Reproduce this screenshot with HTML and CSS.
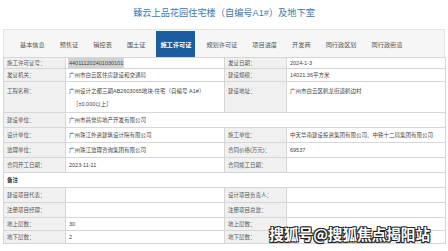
FILE: index.html
```html
<!DOCTYPE html>
<html>

<head>
	<title>施工许可证</title>
	<link rel="stylesheet" href="styles.css">
</head>

<body>
	<div class="title">臻云上品花园住宅楼（自编号A1#）及地下室</div>

	<!-- tab bar -->
	<div class="tabs">
		<span class="tab">基本信息</span>
		<span class="tab">预售证</span>
		<span class="tab">销控表</span>
		<span class="tab">国土证</span>
		<span class="tab active">施工许可证</span>
		<span class="tab">规划许可证</span>
		<span class="tab">项目进度</span>
		<span class="tab">开发商</span>
		<span class="tab">同行政区划</span>
		<span class="tab">同行政街道</span>
	</div>

	<table class="info">
		<colgroup>
			<col class="c-label">
			<col class="c-value">
			<col class="c-label">
			<col class="c-value">
		</colgroup>
		<tr class="r1">
			<td class="label">施工许可证号：</td>
			<td><span class="sel">440111202401030101</span></td>
			<td class="label">发证日期：</td>
			<td>2024-1-3</td>
		</tr>
		<tr class="r2">
			<td class="label">发证机关：</td>
			<td>广州市白云区住房建设和交通局</td>
			<td class="label">建设规模：</td>
			<td>14021.36平方米</td>
		</tr>
		<tr class="r3">
			<td class="label">工程名称：</td>
			<td>广州设计之都三期AB2603065地块-住宅（自编号 A1#）<br><span class="indent">［±0.000以上］</span></td>
			<td class="label">建设地址：</td>
			<td>广州市白云区鹤龙街道鹤边村</td>
		</tr>
		<tr>
			<td class="label">建设单位：</td>
			<td colspan="3">广州市昌誉房地产开发有限公司</td>
		</tr>
		<tr>
			<td class="label">设计单位：</td>
			<td>广州珠江外资建筑设计院有限公司</td>
			<td class="label">施工单位：</td>
			<td>中天华南建设投资集团有限公司、中铁十二局集团有限公司</td>
		</tr>
		<tr>
			<td class="label">监理单位：</td>
			<td>广州珠江监理咨询集团有限公司</td>
			<td class="label">合同价格(万元)：</td>
			<td>69537</td>
		</tr>
		<tr>
			<td class="label">合同开工日期：</td>
			<td>2023-11-11</td>
			<td class="label">合同竣工日期：</td>
			<td></td>
		</tr>
		<tr>
			<td colspan="4" class="note">备注</td>
		</tr>
		<tr>
			<td class="label">建设项目代表：</td>
			<td></td>
			<td class="label">设计项目负责人：</td>
			<td></td>
		</tr>
		<tr>
			<td class="label">注册项目经理：</td>
			<td></td>
			<td class="label">注册项目总监：</td>
			<td></td>
		</tr>
		<tr class="r-low">
			<td class="label">地上层数：</td>
			<td>30</td>
			<td class="label">地上层数：</td>
			<td></td>
		</tr>
		<tr class="r-low">
			<td class="label">地下层数：</td>
			<td>2</td>
			<td class="label">地下层数：</td>
			<td></td>
		</tr>
	</table>

	<div class="watermark">搜狐号@搜狐焦点揭阳站</div>
</body>

</html>
```

FILE: styles.css
```css
body {
	margin: 0;
	padding: 0;
	background-color: #fff;
	font-family: "Liberation Sans", "Noto Sans CJK SC", sans-serif;
	overflow: hidden;
	position: relative;
	height: 251px;
}

.title {
	height: 29px;
	line-height: 26px;
	text-align: center;
	font-size: 9.2px;
	color: #3b77b0;
}

.tabs {
	display: flex;
	gap: 7px;
	margin: 0 3px;
	height: 26px;
	padding: 1px 0 0 12px;
	border: 1px solid #e3e3e3;
	border-bottom: none;
	background-color: #f6f6f6;
}

.tab {
	display: flex;
	align-items: center;
	padding: 0 4px;
	font-size: 6.2px;
	color: #555;
}

.tab.active {
	background-color: #1b5d9e;
	color: #fff;
	font-weight: bold;
}

.info {
	margin-left: 3px;
	width: 442px;
	table-layout: fixed;
	border-collapse: collapse;
	font-size: 5.5px;
	line-height: 8px;
	color: #444;
}

.c-label {
	width: 62px;
}

.c-value {
	width: 159px;
}

.info td {
	height: 14px;
	padding: 0 3px;
	border: 1px solid #d6d6d6;
	white-space: nowrap;
	vertical-align: middle;
}

.info td.label {
	background-color: #f0f0f0;
	color: #555;
}

.info .r1 td {
	height: 10px;
}

.info .r2 td {
	height: 12px;
}

.info .r3 td {
	height: 27px;
	vertical-align: top;
	padding-top: 3px;
	line-height: 13px;
}

.info .r-low td {
	height: 12px;
}

.info td.note {
	color: #333;
	font-weight: bold;
}

.sel {
	display: inline-block;
	background-color: #d2d2d2;
	line-height: 10px;
	padding: 0 1px;
	margin-left: -1px;
	vertical-align: middle;
}

.indent {
	padding-left: 4px;
}

/* watermark over the bottom right corner */
.watermark {
	position: absolute;
	right: 18px;
	bottom: 8px;
	font-family: "Noto Sans CJK SC", sans-serif;
	font-size: 14.6px;
	line-height: 18px;
	font-weight: bold;
	color: #fff;
	text-shadow: 1px 1px 0 #222, -1px -1px 0 #222, 1px -1px 0 #222, -1px 1px 0 #222, 0 1px 1px #000;
}
```
